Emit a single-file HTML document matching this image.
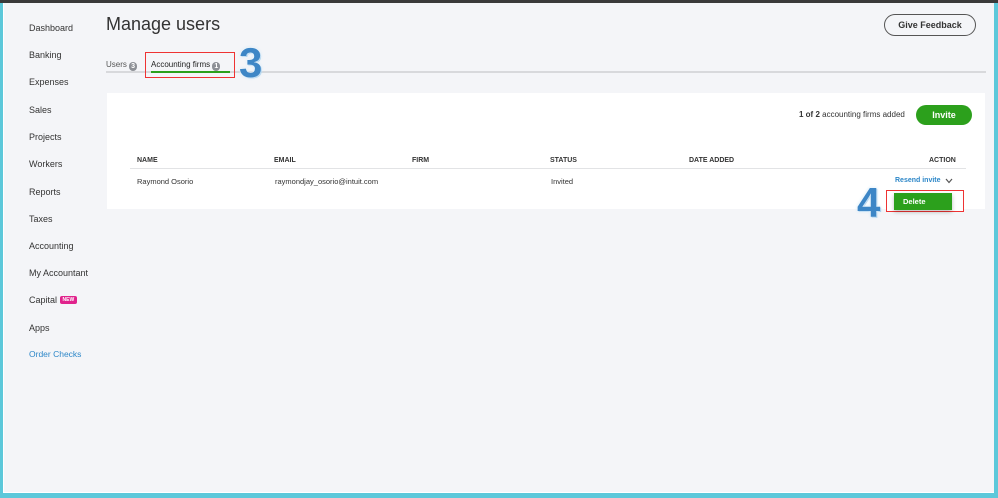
<!DOCTYPE html>
<html><head><style>
*{margin:0;padding:0;box-sizing:border-box}
body{width:998px;height:498px;overflow:hidden;background:#5cc8da;font-family:"Liberation Sans",sans-serif;position:relative}
.top{position:absolute;left:0;top:0;width:998px;height:3px;background:#3a3a3a}
.page{position:absolute;left:3px;top:3px;width:991px;height:490px;background:#f4f5f8;border-left:1px solid #fff;border-bottom:1px solid #fff}
.nav{position:absolute;left:29px;font-size:9px;color:#333}
.t{position:absolute;font-size:8px;color:#333}
.b{font-weight:bold}
.bd{display:inline-block;background:#8d9096;color:#fff;font-size:7px;line-height:9px;min-width:8px;text-align:center;border-radius:4px;padding:0 1px;vertical-align:-1px;font-weight:bold}
.num{position:absolute;font-weight:bold;color:#3d86c6;font-size:42px;font-family:"Liberation Sans",sans-serif;text-shadow:0 0 2px #fff,0 0 3px #bfe0f5,1px 1px 0 #9cc8ea}
</style></head><body>
<div class="top"></div>
<div class="page"></div>
<div class="nav" style="top:23px">Dashboard</div>
<div class="nav" style="top:50px">Banking</div>
<div class="nav" style="top:77px">Expenses</div>
<div class="nav" style="top:105px">Sales</div>
<div class="nav" style="top:132px">Projects</div>
<div class="nav" style="top:159px">Workers</div>
<div class="nav" style="top:187px">Reports</div>
<div class="nav" style="top:214px">Taxes</div>
<div class="nav" style="top:241px">Accounting</div>
<div class="nav" style="top:268px">My Accountant</div>
<div class="nav" style="top:295px">Capital <span style="display:inline-block;background:#e0238c;color:#fff;font-size:5px;font-weight:bold;padding:1px 3px;border-radius:2px;vertical-align:2px">NEW</span></div>
<div class="nav" style="top:323px">Apps</div>
<div class="nav" style="top:349px;color:#2d87c8;font-size:8.5px">Order Checks</div>

<div style="position:absolute;left:106px;top:14px;font-size:18px;color:#333">Manage users</div>
<div style="position:absolute;left:884px;top:14px;width:92px;height:22px;border:1px solid #555;border-radius:11px;font-size:9px;font-weight:bold;color:#333;text-align:center;line-height:20px">Give Feedback</div>

<div style="position:absolute;left:106px;top:71px;width:880px;height:2px;background:#d8d9dc"></div>
<div class="t" style="left:106px;top:60px;color:#555">Users <span class="bd">3</span></div>
<div class="t" style="left:151px;top:60px;color:#222">Accounting firms <span class="bd">1</span></div>
<div style="position:absolute;left:151px;top:71px;width:79px;height:2px;background:#2ca01c"></div>
<div style="position:absolute;left:145px;top:52px;width:90px;height:26px;border:1px solid #e33"></div>
<div class="num" style="left:239px;top:39px">3</div>

<div style="position:absolute;left:107px;top:93px;width:878px;height:116px;background:#fff"></div>
<div class="t" style="left:799px;top:110px;color:#333"><b>1 of 2</b> accounting firms added</div>
<div style="position:absolute;left:916px;top:105px;width:56px;height:20px;background:#2ca01c;border-radius:10px;color:#fff;font-size:9px;font-weight:bold;text-align:center;line-height:20px">Invite</div>

<div class="t b" style="left:137px;top:157px;font-size:7px">NAME</div>
<div class="t b" style="left:274px;top:157px;font-size:7px">EMAIL</div>
<div class="t b" style="left:412px;top:157px;font-size:7px">FIRM</div>
<div class="t b" style="left:550px;top:157px;font-size:7px">STATUS</div>
<div class="t b" style="left:689px;top:157px;font-size:7px">DATE ADDED</div>
<div class="t b" style="left:929px;top:157px;font-size:7px">ACTION</div>
<div style="position:absolute;left:130px;top:168px;width:836px;height:1px;background:#e2e3e5"></div>
<div class="t" style="left:137px;top:177px;font-size:7.5px">Raymond Osorio</div>
<div class="t" style="left:275px;top:177px;font-size:7.5px">raymondjay_osorio@intuit.com</div>
<div class="t" style="left:551px;top:177px;font-size:7.5px">Invited</div>
<div class="t b" style="left:895px;top:177px;font-size:7px;color:#2d87c8">Resend invite</div>
<svg style="position:absolute;left:945px;top:178px" width="8" height="6"><path d="M1 1 L4 4.5 L7 1" fill="none" stroke="#555" stroke-width="1.2"/></svg>

<div style="position:absolute;left:886px;top:190px;width:78px;height:22px;border:1px solid #e33;background:#fff"></div>
<div style="position:absolute;left:894px;top:193px;width:58px;height:17px;background:#2ca01c;color:#fff;font-size:7.5px;font-weight:bold;line-height:17px;padding-left:9px;box-shadow:0 2px 4px rgba(0,0,0,.25)">Delete</div>
<div class="num" style="left:857px;top:179px">4</div>
</body></html>
